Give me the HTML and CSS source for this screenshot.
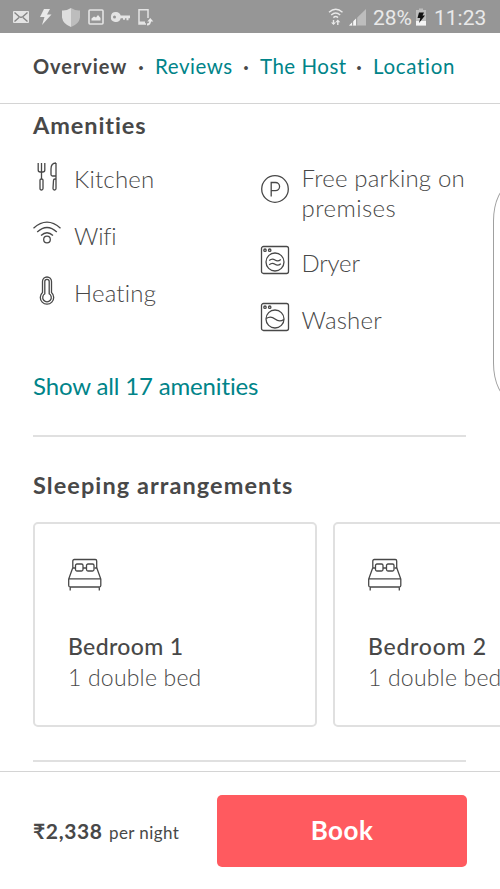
FILE: index.html
```html
<!DOCTYPE html>
<html lang="en">
<head>
<meta charset="utf-8">
<title>Listing</title>
<link rel="stylesheet" href="styles.css">
</head>
<body>
<div class="screen">
  <header class="status">
    <svg class="status-left" width="160" height="33" viewBox="0 0 160 33">
      <rect x="13" y="11" width="16" height="12" rx="1" fill="#e4e4e4"/>
      <path d="M14.500 12.500l4.500 4q2 1.500 4 0l4.500-4M14.500 21.500L19 17.500M27.500 21.500L23 17.500" fill="none" stroke="#858585" stroke-width="1.400"/>
      <path d="M44 9h6l-3 5.500h4.500L42 25l2.500-8H40z" fill="#e9e9e9"/>
      <path d="M71 8q5 3 9 2.500v7Q79 24 71 27z" fill="#bdbdbd"/>
      <path d="M71 8q-5 3-9 2.500v7Q63 24 71 27z" fill="#dedede"/>
      <rect x="89" y="10" width="14" height="14" rx="1" fill="none" stroke="#e4e4e4" stroke-width="1.600"/>
      <path d="M91.500 20.500v-2l2.500-2 2 1 2-2.500 2.500 3v2.500z" fill="#e9e9e9"/>
      <path fill-rule="evenodd" d="M116 12a5 5 0 0 1 4.700 3.500h9.300v2.800h-1.500v2h-2v-2h-1.500v1.500h-2v-1.500h-2.300A5 5 0 1 1 116 12zM114.500 15.500a1.500 1.500 0 1 0 0 3 1.500 1.500 0 0 0 0-3z" fill="#e4e4e4"/>
      <path d="M148 18v-8.300h-9V24h7" fill="none" stroke="#e4e4e4" stroke-width="1.500"/>
      <path d="M139 21.500h6v2.500h-6z" fill="#e4e4e4"/>
      <path d="M147 24.500q3.500 0 3.200-4.500" fill="none" stroke="#e9e9e9" stroke-width="1.800"/>
      <path d="M147.300 21.500l3-3.500 3 3.500z" fill="#e9e9e9"/>
    </svg>
    <svg class="status-signal" width="40" height="33" viewBox="0 0 40 33">
      <g fill="none" stroke="#e9e9e9" stroke-width="1.400">
        <path d="M1 12.200q6.700-6 13.500 0M3.200 15q4.500-4 9 0M5.400 17.600q2.300-2 4.600 0"/>
        <path d="M5.500 20v4M9.800 21v4"/>
      </g>
      <path d="M3 22.500h5L5.500 25zM7.300 22.300h5L9.800 19.500z" fill="#e9e9e9"/>
      <path d="M21 25.500L38 9v16.500z" fill="#bdbdbd"/>
      <path d="M21 25.500l3.500-3.500v3.500zM25 25.500v-4l3-3v7z" fill="#f5f5f5"/>
      <path d="M24.700 21v4.500M28.700 17v8.500" stroke="#969696"/>
    </svg>
    <span class="status-text battery-text">28%</span>
    <svg class="battery" width="12" height="33" viewBox="0 0 12 33">
      <path d="M4 8.500h4V10h3v15.500H1V10h3z" fill="#bdbdbd"/>
      <path d="M1 21h10v4.500H1z" fill="#f5f5f5"/>
      <path d="M4 12.500h5l-1.500 3h2.500L4 23l1.300-5H2.500z" fill="#111"/>
    </svg>
    <span class="status-text clock">11:23</span>
  </header>

  <nav class="tabs">
    <b class="tab-overview">Overview</b><i>·</i><a class="tab-reviews">Reviews</a><i>·</i><a class="tab-host">The Host</a><i>·</i><a class="tab-location">Location</a>
  </nav>

  <main>
    <h2 class="h-amenities">Amenities</h2>
    <div class="amenities">
      <ul>
        <li>
          <svg width="28" height="30" viewBox="0 0 28 30">
            <path d="M5.200 1v7q0 2 2 2h2.600q2 0 2-2V1M8.500 1v16M7 18q0-1 1.500-1t1.500 1v8.500q0 1.500-1.500 1.500T7 26.500zM23 1v16.500M23 1q-5 0-5 6v5.500q0 1.500 1.500 1.500H23M20.500 18.500q0-1.500 1.500-1.500h1v9.500q0 1.500-1.500 1.500T20 26.500z"/>
          </svg>
          <span class="t-kitchen">Kitchen</span>
        </li>
        <li>
          <svg width="28" height="30" viewBox="0 0 28 30">
            <path d="M.5 9.200Q14-3 27.500 9.200M4.200 13q9.800-9 19.600 0M8 16.500q6-5.500 12 0"/><circle cx="14" cy="20.500" r="3.300"/>
          </svg>
          <span class="t-wifi">Wifi</span>
        </li>
        <li>
          <svg width="28" height="30" viewBox="0 0 28 30">
            <path d="M9.500 16.500V5.500a4.500 4.500 0 0 1 9 0v11a6.700 6.700 0 1 1-9 0z"/>
            <path d="M11.800 17.800V5.500a2.200 2.200 0 0 1 4.400 0v12.300a4.300 4.300 0 1 1-4.400 0z"/>
          </svg>
          <span class="t-heating">Heating</span>
        </li>
      </ul>
      <ul class="second">
        <li class="tall">
          <svg width="30" height="30" viewBox="0 0 30 30">
            <circle cx="15" cy="15" r="13.300"/><path d="M11.200 22.500V8.500h4.300a4.100 4.100 0 0 1 0 8.200h-4.300"/>
          </svg>
          <span class="t-parking">Free parking on<br><em>premises</em></span>
        </li>
        <li>
          <svg width="30" height="30" viewBox="0 0 30 30">
            <rect x="1.500" y="1.500" width="27" height="27" rx="2"/><circle cx="5" cy="5.200" r="1.200"/><circle cx="9.700" cy="5.200" r="1.200"/><circle cx="15" cy="17" r="9"/>
            <path d="M9.200 15.500q3-2.500 5.800-.5t5.800-.5M9.200 19.700q3-2.500 5.800-.5t5.800-.5"/>
          </svg>
          <span class="t-dryer">Dryer</span>
        </li>
        <li>
          <svg width="30" height="30" viewBox="0 0 30 30">
            <rect x="1.500" y="1.500" width="27" height="27" rx="2"/><circle cx="5" cy="5.200" r="1.200"/><circle cx="9.700" cy="5.200" r="1.200"/><circle cx="15" cy="17" r="9"/>
            <path d="M6.200 16.500q4.500-3 8.800.5t8.800.5"/>
          </svg>
          <span class="t-washer">Washer</span>
        </li>
      </ul>
    </div>
    <a class="show-all">Show all 17 amenities</a>
    <hr class="rule">
    <h2 class="h-sleep">Sleeping arrangements</h2>
    <div class="rooms">
      <article class="room">
        <svg width="36" height="34" viewBox="0 0 36 34">
          <path d="M5.800 10.500V3q0-1.500 1.500-1.500h20.900q1.500 0 1.500 1.500v7.500M5.200 10h3M16 10h3.500M27.500 10h3M5.500 10.500L1.700 21v6.500q0 1.500 1.500 1.500h29.100q1.500 0 1.500-1.500V21L30 10.500M1.700 20.800h32.100M3.200 29v3.500M32.300 29v3.500"/>
          <rect x="8.500" y="6" width="7.500" height="7" rx="1.500"/><rect x="19.500" y="6" width="7.500" height="7" rx="1.500"/>
        </svg>
        <h3>Bedroom 1</h3>
        <p>1 double bed</p>
      </article>
      <article class="room">
        <svg width="36" height="34" viewBox="0 0 36 34">
          <path d="M5.800 10.500V3q0-1.500 1.500-1.500h20.900q1.500 0 1.500 1.500v7.500M5.200 10h3M16 10h3.500M27.500 10h3M5.500 10.500L1.700 21v6.500q0 1.500 1.500 1.500h29.100q1.500 0 1.500-1.500V21L30 10.500M1.700 20.800h32.100M3.200 29v3.500M32.300 29v3.500"/>
          <rect x="8.500" y="6" width="7.500" height="7" rx="1.500"/><rect x="19.500" y="6" width="7.500" height="7" rx="1.500"/>
        </svg>
        <h3 class="wide">Bedroom 2</h3>
        <p>1 double bed</p>
      </article>
    </div>
    <hr class="rule last">
  </main>

  <footer class="booking">
    <div class="price"><b>₹2,338</b><span>per night</span></div>
    <button>Book</button>
  </footer>
  <div class="edge-handle"></div>
</div>
</body>
</html>
```

FILE: styles.css
```css
* { box-sizing: border-box; margin: 0; padding: 0; }
body { background: #fff; color: #484848; font-family: Lato, "Liberation Sans", sans-serif; overflow: hidden; }
svg { display: block; flex: none; }
.screen { position: relative; display: flex; flex-direction: column; width: 500px; height: 889px; overflow: hidden; }

.status { display: flex; flex: none; height: 33px; background: #969696; color: #e9e9e9; font-family: Roboto, sans-serif; }
.status-signal { margin-left: 168px; }
.status-text { font-size: 21px; line-height: 36px; white-space: nowrap; }
.battery-text { margin-left: 5px; width: 38px; }
.battery { margin-left: 4px; }
.clock { margin-left: 7px; }

.tabs { display: flex; flex: none; height: 71px; padding-left: 33px; border-bottom: 1px solid #d4d4d4; font-size: 20px; line-height: 66px; white-space: nowrap; }
.tabs i { width: 28px; text-align: center; font-style: normal; font-weight: 700; }
.tabs a, .show-all { color: #008489; }
.tabs a { font-size: 20.500px; font-weight: 400; }
.tab-overview { width: 94px; letter-spacing: 0.950px; }
.tab-reviews { width: 77px; letter-spacing: 0.550px; }
.tab-host { width: 85px; letter-spacing: 0.500px; }
.tab-location { letter-spacing: 0.700px; }

main { flex: 1; min-height: 0; padding-left: 33px; overflow: hidden; }
h2 { font-size: 23.500px; line-height: 30px; font-weight: 700; white-space: nowrap; }
.h-amenities { margin-top: 6px; letter-spacing: 0.900px; }
.amenities { display: grid; grid-template-columns: 227px 1fr; margin-top: 24px; height: 194px; }
ul { list-style: none; }
li { display: flex; height: 57px; font-size: 24px; line-height: 30px; font-weight: 300; white-space: nowrap; }
.second li { line-height: 31px; }
.second li.tall { height: 84px; margin-top: -1px; line-height: 30px; }
li.tall svg { margin-top: 11px; }
li em { font-style: normal; letter-spacing: 0.450px; }
li svg, .room svg { fill: none; stroke: #484848; stroke-width: 1.300; margin-top: -2px; }
li span { margin-left: 13px; letter-spacing: 0.200px; }
.t-wifi { letter-spacing: -0.200px; }
.second span { margin-left: 11.500px; }
.second .t-dryer { letter-spacing: -0.200px; }
.t-parking, .second .t-washer { letter-spacing: 0.200px; }
.show-all { display: block; margin-top: 13px; font-size: 24px; line-height: 30px; letter-spacing: -0.150px; }
.rule { width: 433px; height: 2px; border: 0; background: #e0e0e0; margin-top: 34px; }
.h-sleep { margin-top: 33px; letter-spacing: 1.070px; }
.rooms { display: flex; gap: 16px; margin-top: 22px; }
.room { flex: none; width: 284px; height: 205px; padding: 36px 0 0 33px; border: 2px solid #e0e0e0; border-radius: 5px; white-space: nowrap; }
.room svg { margin-left: -1px; }
.room h3 { margin-top: 39px; font-size: 23px; line-height: 31px; font-weight: 500; letter-spacing: 0.350px; }
.room h3.wide { letter-spacing: 0.750px; }
.room p { font-size: 23px; line-height: 31px; font-weight: 300; letter-spacing: 0.200px; }
.rule.last { margin-top: 33px; }

.booking { display: flex; flex: none; height: 118px; padding: 22px 33px 0 33px; border-top: 1px solid #d4d4d4; background: #fff; justify-content: space-between; }
.price { display: flex; align-items: baseline; line-height: 74px; white-space: nowrap; }
.price b { width: 76px; font-size: 21px; letter-spacing: 0.650px; }
.price span { font-size: 17px; letter-spacing: 0.400px; }
.booking button { width: 250px; height: 72px; margin-top: 1px; border: 0; border-radius: 5px; background: #ff5a5f; color: #fff; font: 700 26px/70px Lato, sans-serif; letter-spacing: 0.500px; padding-bottom: 3px; }
.edge-handle { position: absolute; left: 493px; top: 185px; width: 40px; height: 214px; border: 1px solid #a0a0a0; border-radius: 18px/36px; background: #fff; }
```
